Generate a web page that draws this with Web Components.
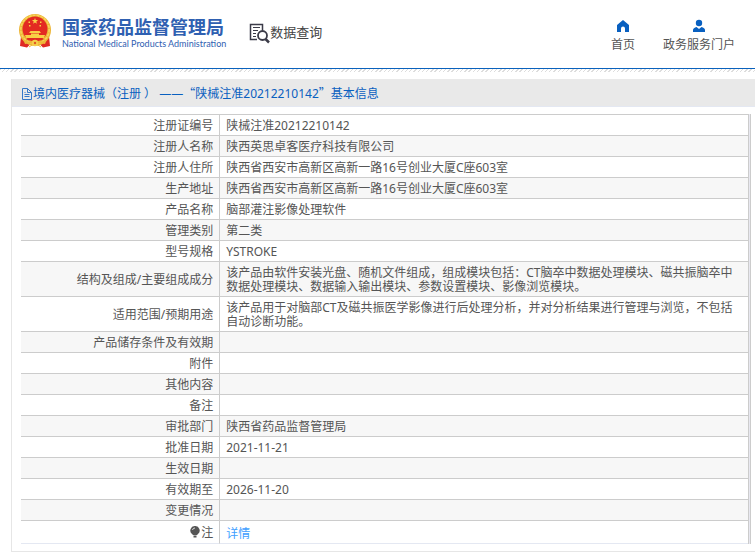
<!DOCTYPE html>
<html lang="zh-CN">
<head>
<meta charset="utf-8">
<title>数据查询</title>
<style>
body{margin:0;background:#fff;color:#555;font:12px/14px "Noto Sans","Noto Sans CJK SC",sans-serif}
.wide{font-family:"Noto Sans CJK SC",sans-serif}
</style>
</head>
<body>
<site-header>
  <site-brand slot="brand"></site-brand>
  <query-heading slot="heading">数据查询</query-heading>
  <nav-link slot="nav" icon="home">首页</nav-link>
  <nav-link slot="nav" icon="user">政务服务门户</nav-link>
</site-header>
<info-panel>
  <span slot="title">境内医疗器械（注册 ） ——<span class="wide">“</span>陕械注准20212210142<span class="wide">”</span>基本信息</span>
  <record-table></record-table>
</info-panel>
<script>
class Base extends HTMLElement{
  constructor(){super();this.attachShadow({mode:"open"}).innerHTML=this.view();}
}
customElements.define("site-header",class extends Base{
  view(){return `<style>
    :host{display:block}
    header{display:flex;align-items:flex-start;height:68px;padding:0 20px 0 18px;border-bottom:1px solid #0a62bd}
    nav{display:flex;gap:28px;margin-left:auto;padding-top:19px}
    .hatch{height:3px;background:repeating-linear-gradient(135deg,#ddd 0 1px,#fff 1px 3px)}
  </style><header><slot name="brand"></slot><slot name="heading"></slot><nav><slot name="nav"></slot></nav></header><div class="hatch"></div>`}
});
customElements.define("site-brand",class extends Base{
  view(){return `<style>
    :host{display:flex;gap:10px;padding-top:13px;color:#2f60b1;white-space:nowrap}
    svg{width:34px;height:36px;flex:none}
    b,span{display:block}
    b{font:bold 18px/24px "Noto Sans CJK SC",sans-serif;padding-top:1px}
    span{font:400 9px/12px Lato,sans-serif}
  </style>
  <svg viewBox="0 0 34 36" aria-hidden="true">
    <path d="M3 23L2 33l7 1.500 3-3h10l3 3 7-1.500L31 23z" fill="#df2923"/>
    <circle cx="17" cy="17" r="16" fill="#edb637"/>
    <circle cx="17" cy="16.500" r="14.200" fill="none" stroke="#f7d65c" stroke-width="1.500" stroke-dasharray="3 1"/>
    <circle cx="17" cy="16" r="12.500" fill="#e32a22"/>
    <path d="M17 5l.8 2.100h2.300l-1.800 1.400.6 2.200-1.900-1.300-1.900 1.300.6-2.200-1.800-1.400h2.300z" fill="#f8d04a"/>
    <path d="M10.500 8.500H12V10h-1.500zM22 8.500h1.500V10H22zM11 12h1.500v1.500H11zM21.500 12H23v1.500h-1.500zM12.500 18h9l1.500 2H11zM13 20.500h8V22h-8zM7 22h20l-1 3H8z" fill="#f8cf45"/>
    <path d="M5 26l6 3 6-2 6 2 6-3-2 5-5-1-5 2-5-2-5 1z" fill="#edb637"/>
    <path d="M8 26l3 1.500 6-1.500 6 1.500 3-1.500-3-1H11z" fill="#df2923"/>
    <circle cx="17" cy="30" r="3.200" fill="#f5cf4a"/><circle cx="17" cy="30" r="1.200" fill="#e05a24"/>
    <path d="M11 34l3-2M23 34l-3-2" stroke="#f0b52f" fill="none"/>
  </svg><div><b>国家药品监督管理局</b><span>National Medical Products Administration</span></div>`}
});
customElements.define("query-heading",class extends Base{
  view(){return `<style>
    :host{display:flex;margin-left:23px;padding-top:22px;color:#444;white-space:nowrap}
    svg{width:21px;height:22px;flex:none}
    h1{margin:0;font:400 13px/20px "Noto Sans CJK SC",sans-serif}
  </style><svg viewBox="0 0 21 22" fill="none" stroke="#3b3b48" aria-hidden="true">
    <path d="M8 17.500H1.500v-15h12v6" stroke-width="1.500"/><path d="M4 5.500h7M4 8.500h5M4 11.500h3M4 14.500h3"/>
    <circle cx="13.500" cy="13.500" r="4.500" stroke-width="1.800"/><path d="M16.500 17l3.500 3.500" stroke-width="2.500"/>
  </svg><h1><slot></slot></h1>`}
});
const icons={
  home:'<path d="M7 1l6 5v7H9V9.500a2 2 0 0 0-4 0V13H1V6z"/>',
  user:'<circle cx="7" cy="4" r="3.200"/><path d="M1 13v-2c0-1.500 1.500-2.500 3.500-3L7 10l2.500-2c2 .5 3.500 1.500 3.500 3v2z"/>'
};
customElements.define("nav-link",class extends Base{
  view(){return `<style>
    :host{display:block}
    a{display:flex;flex-direction:column;align-items:center;gap:4px;color:#555;text-decoration:none;line-height:16px;white-space:nowrap}
    svg{width:14px;height:14px;fill:#0960c0}
  </style><a href="#"><svg viewBox="0 0 14 14" aria-hidden="true">${icons[this.getAttribute("icon")]}</svg><slot></slot></a>`}
});
customElements.define("info-panel",class extends Base{
  view(){return `<style>
    :host{display:block;margin:7px 0 0 11px}
    section{border:solid #e6e6e6;border-width:0 0 1px 1px}
    h2{display:flex;align-items:center;box-sizing:border-box;margin:0;padding:2px 0 0 9px;height:28px;background:#e9e9e9;border-bottom:1px solid #e4e8f2;color:#0960c0;font:inherit}
    svg{width:12px;height:12px;flex:none}
    .body{padding:7px 4px 7px 9px}
  </style><section><h2><svg viewBox="0 0 12 12" fill="none" stroke="#3678c8" aria-hidden="true"><path d="M1.500 .5h5l4 4v7h-9zM6.500 .5v4h4M3.500 4.500h1M3.500 6.500h5M3.500 8.500h5"/></svg><slot name="title"></slot></h2><div class="body"><slot></slot></div></section>`}
});
const address="陕西省西安市高新区高新一路16号创业大厦C座603室";
const rows=[
  ["注册证编号","陕械注准20212210142"],["注册人名称","陕西英思卓客医疗科技有限公司"],
  ["注册人住所",address],["生产地址",address],["产品名称","脑部灌注影像处理软件"],
  ["管理类别","第二类"],["型号规格","YSTROKE"],
  ["结构及组成/主要组成成分","该产品由软件安装光盘、随机文件组成，组成模块包括：CT脑卒中数据处理模块、磁共振脑卒中数据处理模块、数据输入输出模块、参数设置模块、影像浏览模块。"],
  ["适用范围/预期用途","该产品用于对脑部CT及磁共振医学影像进行后处理分析，并对分析结果进行管理与浏览，不包括自动诊断功能。"],
  ["产品储存条件及有效期",""],["附件",""],["其他内容",""],["备注",""],
  ["审批部门","陕西省药品监督管理局"],["批准日期","2021-11-21"],["生效日期",""],
  ["有效期至","2026-11-20"],["变更情况",""]
];
const bulb='<svg viewBox="0 0 10 12" aria-hidden="true"><path d="M5 0a4.500 4.500 0 0 1 3 8L7 9H3L2 8a4.500 4.500 0 0 1 3-8z" fill="#555"/><path d="M3.500 10.500h3" stroke="#555" stroke-width="2"/><path d="M2.500 4A2.500 2.500 0 0 1 5 2" fill="none" stroke="#ddd"/></svg>';
customElements.define("record-table",class extends Base{
  view(){return `<style>
    :host{display:block;border-right:1px solid #ccc;padding-right:1px;background:#e8e8f0}
    table{width:100%;border-collapse:separate;border-spacing:0;border-right:1px solid #ccc;border-top:1px solid #ccc;background:#fff}
    th,td{box-sizing:border-box;height:21px;padding:4px 6px 2px;border-bottom:1px solid #ccc;font-weight:400;line-height:14px;vertical-align:middle}
    th{width:27.400%;text-align:right;border-right:1px solid #ccc}
    td{text-align:left;line-break:anywhere}
    tr:nth-child(even){background:#f7f7f7}
    tr.long :is(th,td){height:35px}
    tr:last-child{background:#fff}
    tr:last-child :is(th,td){height:23px;border-bottom-color:#e4e8f2}
    tr:last-child td{padding-top:6px}
    a{color:#409eff;text-decoration:none}
    svg{width:10px;height:12px;margin-right:1px;vertical-align:-1px}
  </style><table><tbody>${rows.map(([k,v])=>`<tr${v.length>45?' class="long"':''}><th scope="row">${k}</th><td>${v}</td></tr>`).join("")}<tr><th scope="row">${bulb}注</th><td><a href="#">详情</a></td></tr></tbody></table>`}
});
</script>
</body>
</html>
